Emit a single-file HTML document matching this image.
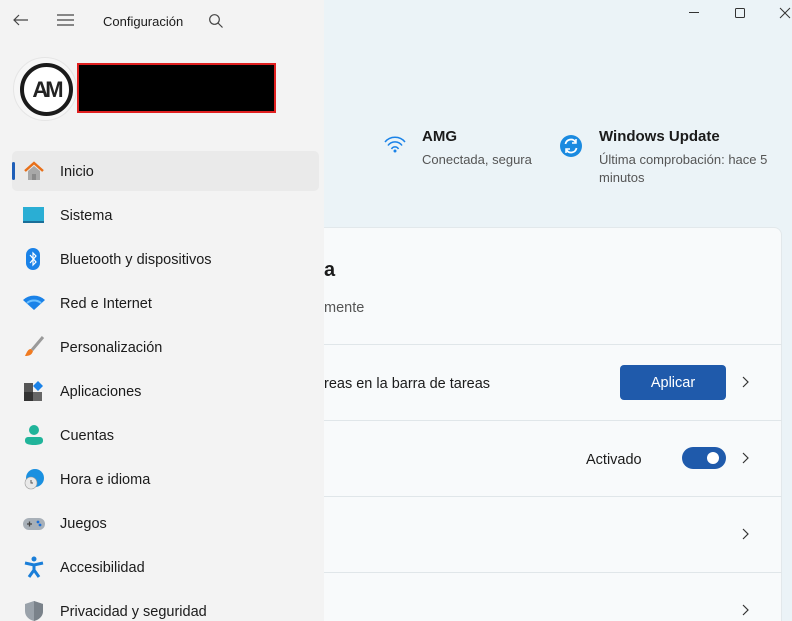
<!DOCTYPE html>
<html><head><meta charset="utf-8"><style>
*{margin:0;padding:0;box-sizing:border-box}
html,body{width:792px;height:621px;overflow:hidden}
body{font-family:"Liberation Sans",sans-serif;background:#ebf3f7;position:relative;color:#1b1b1b}
.side{position:absolute;left:0;top:0;width:324px;height:621px;background:#f3f3f3}
.t{position:absolute;white-space:nowrap}
.nav{position:absolute;left:0;width:324px;height:40px}
.nav .ic{position:absolute;left:23px;top:9px;width:22px;height:22px}
.nav .lb{position:absolute;left:60px;top:13px;font-size:14.5px;color:#1b1b1b}
.card{position:absolute;left:324px;top:227px;width:458px;height:394px;background:#f8fafb;border:1px solid #e2e8eb;border-left:none;border-bottom:none;border-radius:0 8px 0 0}
.hr{position:absolute;left:324px;width:458px;height:1px;background:#e0e6e9}
.chev{position:absolute;left:742px;width:8px;height:12px}
</style></head><body>
<div class="side">
<svg class="t" style="left:12px;top:13px" width="18" height="14"><path d="M16 7H2M7 2L2 7l5 5" stroke="#444" stroke-width="1.2" fill="none"/></svg>
<svg class="t" style="left:57px;top:13px" width="18" height="14"><path d="M0 2h17M0 7h17M0 12h17" stroke="#444" stroke-width="1.2"/></svg>
<div class="t" style="left:103px;top:14px;font-size:13px">Configuración</div>
<svg class="t" style="left:208px;top:13px" width="16" height="16"><circle cx="6.5" cy="6.5" r="4.8" stroke="#444" stroke-width="1.2" fill="none"/><path d="M10 10l4.5 4.5" stroke="#444" stroke-width="1.2"/></svg>
<div class="t" style="left:13px;top:57px;width:64px;height:64px;border-radius:50%;background:#f6f6f6;border:1px solid #e5e5e5"></div>
<div class="t" style="left:20px;top:63px;width:53px;height:53px;border-radius:50%;border:4px solid #1a1a1a;background:#fff;font-weight:bold;font-size:22px;line-height:45px;text-align:center;letter-spacing:-3px;color:#222">AM</div>
<div class="t" style="left:77px;top:63px;width:199px;height:50px;background:#000;border:2px solid #e02020"></div>
<div class="t" style="left:12px;top:151px;width:307px;height:40px;background:#eaeaea;border-radius:5px"></div>
<div class="t" style="left:12px;top:162px;width:3px;height:18px;background:#1f5fb8;border-radius:2px"></div>
<div class="nav" style="top:151px"><svg class="ic" viewBox="0 0 22 22"><path d="M2 11L11 3l9 8" stroke="#e8701a" stroke-width="2.5" fill="none"/><path d="M5 11v9h12v-9L11 6z" fill="#a8a8a8"/><rect x="9" y="14" width="4" height="6" fill="#8a8a8a"/></svg><div class="lb">Inicio</div></div>
<div class="nav" style="top:195px"><svg class="ic" viewBox="0 0 22 22"><rect x="0" y="3" width="21" height="16" fill="#2aaed4"/><rect x="0" y="17" width="21" height="2" fill="#1a6e98"/></svg><div class="lb">Sistema</div></div>
<div class="nav" style="top:239px"><svg class="ic" viewBox="0 0 22 22"><rect x="3" y="0" width="14" height="22" rx="7" fill="#1a82e8"/><path d="M7 7l6 7-3 3V5l3 3-6 7" stroke="#fff" stroke-width="1.2" fill="none"/></svg><div class="lb">Bluetooth y dispositivos</div></div>
<div class="nav" style="top:283px"><svg class="ic" viewBox="0 0 22 22"><path d="M0 8a16 16 0 0 1 22 0L11 18z" fill="#1a82e8"/><path d="M4 11a11 11 0 0 1 14 0" stroke="#6cc0ff" stroke-width="2" fill="none"/></svg><div class="lb">Red e Internet</div></div>
<div class="nav" style="top:327px"><svg class="ic" viewBox="0 0 22 22"><path d="M20 1L9 14" stroke="#9a9a9a" stroke-width="3"/><path d="M8 13c-3 0-4 3-6 7 4 0 7-1 8-5z" fill="#f07a20"/></svg><div class="lb">Personalización</div></div>
<div class="nav" style="top:371px"><svg class="ic" viewBox="0 0 22 22"><rect x="1" y="3" width="9" height="9" fill="#555"/><rect x="1" y="12" width="9" height="9" fill="#333"/><rect x="10" y="12" width="9" height="9" fill="#666"/><path d="M15 1l5 5-5 5-5-5z" fill="#1a82e8"/></svg><div class="lb">Aplicaciones</div></div>
<div class="nav" style="top:415px"><svg class="ic" viewBox="0 0 22 22"><circle cx="11" cy="6" r="5" fill="#20b49a"/><path d="M2 16a3 3 0 0 1 3-3h12a3 3 0 0 1 3 3v1c0 3-4 4-9 4s-9-1-9-4z" fill="#20b49a"/></svg><div class="lb">Cuentas</div></div>
<div class="nav" style="top:459px"><svg class="ic" viewBox="0 0 22 22"><circle cx="12" cy="10" r="9" fill="#1a90e0"/><circle cx="8" cy="15" r="6" fill="#e8e8e8" stroke="#999" stroke-width=".6"/><path d="M8 12v3h2" stroke="#555" fill="none"/></svg><div class="lb">Hora e idioma</div></div>
<div class="nav" style="top:503px"><svg class="ic" viewBox="0 0 22 22"><rect x="0" y="6" width="22" height="12" rx="6" fill="#a8b0b8"/><path d="M4 12h5M6.5 9.5v5" stroke="#444" stroke-width="1.3"/><circle cx="15" cy="10" r="1.4" fill="#1a6ed8"/><circle cx="17" cy="13" r="1.4" fill="#1a6ed8"/></svg><div class="lb">Juegos</div></div>
<div class="nav" style="top:547px"><svg class="ic" viewBox="0 0 22 22"><circle cx="11" cy="3" r="2.5" fill="#1a7ed8"/><path d="M2 7l9 2 9-2M11 9v5l-5 7M11 14l5 7" stroke="#1a7ed8" stroke-width="3" fill="none"/></svg><div class="lb">Accesibilidad</div></div>
<div class="nav" style="top:591px"><svg class="ic" viewBox="0 0 22 22"><path d="M11 1l9 3v7c0 6-5 9-9 10-4-1-9-4-9-10V4z" fill="#9aa2aa"/><path d="M11 1v20c4-1 9-4 9-10V4z" fill="#7a828a"/></svg><div class="lb">Privacidad y seguridad</div></div>
</div>

<svg class="t" style="left:687px;top:3px" width="105" height="16"><path d="M2 9.5h10" stroke="#333"/><rect x="48.5" y="5.5" width="9" height="9" rx="1" stroke="#333" fill="none"/><path d="M93 5l10 10M103 5l-10 10" stroke="#333"/></svg>

<svg class="t" style="left:383px;top:136px" width="24" height="18"><path d="M2 6a13 13 0 0 1 20 0M5 9.5a8.5 8.5 0 0 1 14 0M8.5 13a4 4 0 0 1 7 0" stroke="#1a82e8" stroke-width="1.5" fill="none"/><circle cx="12" cy="15" r="1.5" fill="#1a82e8"/></svg>
<div class="t" style="left:422px;top:128px;font-size:15px;font-weight:bold">AMG</div>
<div class="t" style="left:422px;top:152px;font-size:13px;color:#555">Conectada, segura</div>
<svg class="t" style="left:559px;top:134px" width="24" height="24"><circle cx="12" cy="12" r="11" fill="#1a8ae0"/><path d="M6.5 10a5.5 5.5 0 0 1 10-2M17.5 14a5.5 5.5 0 0 1-10 2" stroke="#fff" stroke-width="1.8" fill="none"/><path d="M17 5v4h-4M7 19v-4h4" stroke="#fff" stroke-width="1.5" fill="none"/></svg>
<div class="t" style="left:599px;top:128px;font-size:15px;font-weight:bold">Windows Update</div>
<div class="t" style="left:599px;top:151px;font-size:13px;color:#555;line-height:18px">Última comprobación: hace 5<br>minutos</div>

<div class="card"></div>
<div class="t" style="left:324px;top:259px;font-size:20px;font-weight:bold">a</div>
<div class="t" style="left:324px;top:300px;font-size:14.5px;color:#555">mente</div>
<div class="hr" style="top:344px"></div>
<div class="t" style="left:324px;top:376px;font-size:14.5px">reas en la barra de tareas</div>
<div class="t" style="left:620px;top:365px;width:106px;height:35px;background:#1f5aab;border-radius:4px;color:#fff;font-size:14.5px;text-align:center;line-height:37px">Aplicar</div>
<svg class="chev" style="top:376px" viewBox="0 0 8 12"><path d="M1 1l5 5-5 5" stroke="#333" stroke-width="1.2" fill="none"/></svg>
<div class="hr" style="top:420px"></div>
<div class="t" style="left:586px;top:452px;font-size:14.5px">Activado</div>
<div class="t" style="left:682px;top:447px;width:44px;height:22px;background:#1f5aab;border-radius:11px"></div>
<div class="t" style="left:707px;top:452px;width:12px;height:12px;background:#fff;border-radius:50%"></div>
<svg class="chev" style="top:452px" viewBox="0 0 8 12"><path d="M1 1l5 5-5 5" stroke="#333" stroke-width="1.2" fill="none"/></svg>
<div class="hr" style="top:496px"></div>
<svg class="chev" style="top:528px" viewBox="0 0 8 12"><path d="M1 1l5 5-5 5" stroke="#333" stroke-width="1.2" fill="none"/></svg>
<div class="hr" style="top:572px"></div>
<svg class="chev" style="top:604px" viewBox="0 0 8 12"><path d="M1 1l5 5-5 5" stroke="#333" stroke-width="1.2" fill="none"/></svg>
</body></html>
